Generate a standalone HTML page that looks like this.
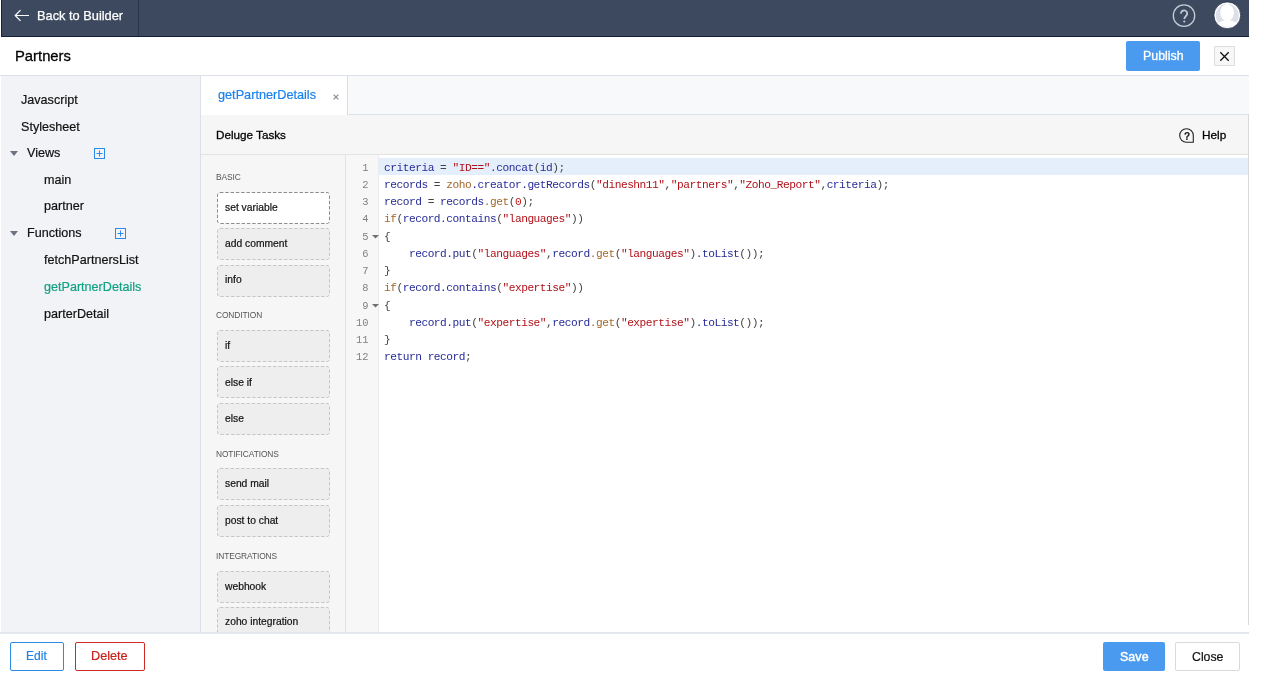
<!DOCTYPE html>
<html><head><meta charset="utf-8"><style>
*{box-sizing:border-box;margin:0;padding:0}
html,body{width:1272px;height:690px;overflow:hidden;background:#fff;font-family:"Liberation Sans",sans-serif;color:#222}
.a{position:absolute}
.t{position:absolute;white-space:pre;will-change:transform;-webkit-text-stroke:0.2px currentColor}
</style></head><body>
<div class="a" style="left:1px;top:0;width:1248px;height:37px;background:#3d495e;border-bottom:1px solid #14203a;border-left:1px solid #18233a"></div>
<div class="a" style="left:138px;top:0;width:1px;height:36px;background:#2b364a"></div>
<svg class="a" style="left:14px;top:9px" width="16" height="13" viewBox="0 0 16 13"><path d="M15 6.5H1.5M6.5 1.2L1.2 6.5L6.5 11.8" fill="none" stroke="#fff" stroke-width="1.2"/></svg>
<div class="t" style="left:37px;top:10px;font-size:12.8px;line-height:12.8px;color:#fff;font-weight:normal;font-family:'Liberation Sans',sans-serif;-webkit-text-stroke:0.25px #fff">Back to Builder</div>
<svg class="a" style="left:1171px;top:3px" width="26" height="26" viewBox="0 0 26 26"><circle cx="13" cy="12.65" r="10.7" fill="none" stroke="#c5ccd8" stroke-width="1.3"/><path d="M10 10.6A3.1 3.1 0 1 1 15.6 12.3C14.9 13.5 13.3 14 13.3 16.1" fill="none" stroke="#c5ccd8" stroke-width="1.8"/><circle cx="13.3" cy="18.5" r="1.1" fill="#c5ccd8"/></svg>
<svg class="a" style="left:1213px;top:1px" width="29" height="29" viewBox="0 0 29 29"><circle cx="14.3" cy="14.3" r="13.4" fill="#fff" stroke="#222d42" stroke-width="0.8"/><circle cx="14.3" cy="14.3" r="11.5" fill="#dde0e8"/><ellipse cx="14.1" cy="11.5" rx="6.8" ry="8.6" fill="#fff"/><path d="M5.48 21.68A11.5 11.5 0 0 0 23.12 21.68A14 12 0 0 0 5.48 21.68Z" fill="#fff"/></svg>
<div class="a" style="left:0;top:75px;width:1249px;height:1px;background:#dde1e8"></div>
<div class="t" style="left:14.6px;top:49px;font-size:14.8px;line-height:14.8px;color:#000;font-weight:normal;font-family:'Liberation Sans',sans-serif;-webkit-text-stroke:0.3px #000">Partners</div>
<div class="a" style="left:1126px;top:41px;width:74px;height:30px;background:#4a9bf0;border-radius:2px"></div>
<div class="t" style="left:1143px;top:50px;font-size:12.4px;line-height:12.4px;color:#fff;font-weight:normal;font-family:'Liberation Sans',sans-serif;-webkit-text-stroke:0.3px #fff">Publish</div>
<div class="a" style="left:1214px;top:46px;width:21px;height:20px;background:#f7f7f7;border:1px solid #dcdcdc;border-radius:1px"></div>
<svg class="a" style="left:1219px;top:51px" width="11" height="11" viewBox="0 0 11 11"><path d="M1.3 1.3L9.7 9.7M9.7 1.3L1.3 9.7" stroke="#111" stroke-width="1.3"/></svg>
<div class="a" style="left:1px;top:76px;width:199px;height:556px;background:#f2f3f6"></div>
<div class="t" style="left:21px;top:94px;font-size:12.6px;line-height:12.6px;color:#111;font-weight:normal;font-family:'Liberation Sans',sans-serif;">Javascript</div>
<div class="t" style="left:21px;top:121px;font-size:12.6px;line-height:12.6px;color:#111;font-weight:normal;font-family:'Liberation Sans',sans-serif;">Stylesheet</div>
<div class="t" style="left:26.5px;top:147px;font-size:12.6px;line-height:12.6px;color:#111;font-weight:normal;font-family:'Liberation Sans',sans-serif;">Views</div>
<div class="t" style="left:43.9px;top:174px;font-size:12.6px;line-height:12.6px;color:#111;font-weight:normal;font-family:'Liberation Sans',sans-serif;">main</div>
<div class="t" style="left:43.9px;top:200px;font-size:12.6px;line-height:12.6px;color:#111;font-weight:normal;font-family:'Liberation Sans',sans-serif;">partner</div>
<div class="t" style="left:26.6px;top:227px;font-size:12.6px;line-height:12.6px;color:#111;font-weight:normal;font-family:'Liberation Sans',sans-serif;">Functions</div>
<div class="t" style="left:43.9px;top:254px;font-size:12.6px;line-height:12.6px;color:#111;font-weight:normal;font-family:'Liberation Sans',sans-serif;">fetchPartnersList</div>
<div class="t" style="left:43.9px;top:281px;font-size:12.6px;line-height:12.6px;color:#12a184;font-weight:normal;font-family:'Liberation Sans',sans-serif;">getPartnerDetails</div>
<div class="t" style="left:43.9px;top:308px;font-size:12.6px;line-height:12.6px;color:#111;font-weight:normal;font-family:'Liberation Sans',sans-serif;">parterDetail</div>
<svg class="a" style="left:10px;top:150.5px" width="8" height="5" viewBox="0 0 8 5"><path d="M0 0H8L4 5Z" fill="#6b7480"/></svg>
<svg class="a" style="left:10px;top:230.8px" width="8" height="5" viewBox="0 0 8 5"><path d="M0 0H8L4 5Z" fill="#6b7480"/></svg>
<svg class="a" style="left:94px;top:148px" width="11" height="11" viewBox="0 0 11 11"><rect x="0.5" y="0.5" width="10" height="10" fill="none" stroke="#2c8ae8" stroke-width="1"/><path d="M5.5 2.5V8.5M2.5 5.5H8.5" stroke="#2c8ae8" stroke-width="1"/></svg>
<svg class="a" style="left:114.5px;top:228.3px" width="11" height="11" viewBox="0 0 11 11"><rect x="0.5" y="0.5" width="10" height="10" fill="none" stroke="#2c8ae8" stroke-width="1"/><path d="M5.5 2.5V8.5M2.5 5.5H8.5" stroke="#2c8ae8" stroke-width="1"/></svg>
<div class="a" style="left:200px;top:76px;width:1049px;height:39px;background:#f8f9fa;border-bottom:1px solid #dfe2e7"></div>
<div class="a" style="left:200px;top:76px;width:148px;height:39px;background:#fff;border-right:1px solid #dadde3"></div>
<div class="t" style="left:218px;top:89px;font-size:12.7px;line-height:12.7px;color:#1a80ec;font-weight:normal;font-family:'Liberation Sans',sans-serif;">getPartnerDetails</div>
<svg class="a" style="left:332.5px;top:93.5px" width="6" height="6" viewBox="0 0 6 6"><path d="M0.6 0.6L5.4 5.4M5.4 0.6L0.6 5.4" stroke="#8d9099" stroke-width="1.3"/></svg>
<div class="a" style="left:200px;top:115px;width:1049px;height:40px;background:#f6f6f6;border-bottom:1px solid #e3e3e3"></div>
<div class="t" style="left:216.4px;top:129px;font-size:11.7px;line-height:11.7px;color:#000;font-weight:normal;font-family:'Liberation Sans',sans-serif;-webkit-text-stroke:0.3px #000">Deluge Tasks</div>
<svg class="a" style="left:1179px;top:128px" width="16" height="16" viewBox="0 0 16 16"><path d="M14.3 14.3H7.5A6.8 6.8 0 1 1 14.3 7.5Z" fill="none" stroke="#222" stroke-width="1.1"/></svg>
<div class="t" style="left:1184.2px;top:132px;font-size:10px;line-height:10px;color:#222;font-weight:bold;font-family:'Liberation Sans',sans-serif;">?</div>
<div class="t" style="left:1201.7px;top:130px;font-size:11.8px;line-height:11.8px;color:#000;font-weight:normal;font-family:'Liberation Sans',sans-serif;-webkit-text-stroke:0.3px #000">Help</div>
<div class="a" style="left:200px;top:155px;width:146px;height:477px;background:#f6f6f6;border-right:1px solid #e2e2e2"></div>
<div class="t" style="left:216px;top:173px;font-size:8.4px;line-height:8.4px;color:#555;font-weight:normal;font-family:'Liberation Sans',sans-serif;letter-spacing:-0.1px;-webkit-text-stroke:0">BASIC</div>
<div class="t" style="left:216px;top:311px;font-size:8.4px;line-height:8.4px;color:#555;font-weight:normal;font-family:'Liberation Sans',sans-serif;letter-spacing:-0.1px;-webkit-text-stroke:0">CONDITION</div>
<div class="t" style="left:216px;top:450px;font-size:8.4px;line-height:8.4px;color:#555;font-weight:normal;font-family:'Liberation Sans',sans-serif;letter-spacing:-0.1px;-webkit-text-stroke:0">NOTIFICATIONS</div>
<div class="t" style="left:216px;top:552px;font-size:8.4px;line-height:8.4px;color:#555;font-weight:normal;font-family:'Liberation Sans',sans-serif;letter-spacing:-0.1px;-webkit-text-stroke:0">INTEGRATIONS</div>
<div class="a" style="left:200px;top:155px;width:145px;height:477px;overflow:hidden">
<svg class="a" style="left:17px;top:37px" width="113" height="32" viewBox="0 0 113 32"><rect x="0.5" y="0.5" width="112" height="31" rx="2.5" fill="#ffffff" stroke="#8c8c8c" stroke-width="1" stroke-dasharray="3.4 1.9"/></svg>
<div class="t" style="left:24.599999999999994px;top:48px;font-size:10.3px;line-height:10.3px;color:#111;font-weight:normal;font-family:'Liberation Sans',sans-serif;">set variable</div>
<svg class="a" style="left:17px;top:73px" width="113" height="32" viewBox="0 0 113 32"><rect x="0.5" y="0.5" width="112" height="31" rx="2.5" fill="#eeeeee" stroke="#c6c6c6" stroke-width="1" stroke-dasharray="3.4 1.9"/></svg>
<div class="t" style="left:24.599999999999994px;top:84px;font-size:10.3px;line-height:10.3px;color:#111;font-weight:normal;font-family:'Liberation Sans',sans-serif;">add comment</div>
<svg class="a" style="left:17px;top:110px" width="113" height="32" viewBox="0 0 113 32"><rect x="0.5" y="0.5" width="112" height="31" rx="2.5" fill="#eeeeee" stroke="#c6c6c6" stroke-width="1" stroke-dasharray="3.4 1.9"/></svg>
<div class="t" style="left:24.599999999999994px;top:120px;font-size:10.3px;line-height:10.3px;color:#111;font-weight:normal;font-family:'Liberation Sans',sans-serif;">info</div>
<svg class="a" style="left:17px;top:175px" width="113" height="32" viewBox="0 0 113 32"><rect x="0.5" y="0.5" width="112" height="31" rx="2.5" fill="#eeeeee" stroke="#c6c6c6" stroke-width="1" stroke-dasharray="3.4 1.9"/></svg>
<div class="t" style="left:24.599999999999994px;top:186px;font-size:10.3px;line-height:10.3px;color:#111;font-weight:normal;font-family:'Liberation Sans',sans-serif;">if</div>
<svg class="a" style="left:17px;top:211px" width="113" height="32" viewBox="0 0 113 32"><rect x="0.5" y="0.5" width="112" height="31" rx="2.5" fill="#eeeeee" stroke="#c6c6c6" stroke-width="1" stroke-dasharray="3.4 1.9"/></svg>
<div class="t" style="left:24.599999999999994px;top:223px;font-size:10.3px;line-height:10.3px;color:#111;font-weight:normal;font-family:'Liberation Sans',sans-serif;">else if</div>
<svg class="a" style="left:17px;top:248px" width="113" height="32" viewBox="0 0 113 32"><rect x="0.5" y="0.5" width="112" height="31" rx="2.5" fill="#eeeeee" stroke="#c6c6c6" stroke-width="1" stroke-dasharray="3.4 1.9"/></svg>
<div class="t" style="left:24.599999999999994px;top:259px;font-size:10.3px;line-height:10.3px;color:#111;font-weight:normal;font-family:'Liberation Sans',sans-serif;">else</div>
<svg class="a" style="left:17px;top:313px" width="113" height="32" viewBox="0 0 113 32"><rect x="0.5" y="0.5" width="112" height="31" rx="2.5" fill="#eeeeee" stroke="#c6c6c6" stroke-width="1" stroke-dasharray="3.4 1.9"/></svg>
<div class="t" style="left:24.599999999999994px;top:324px;font-size:10.3px;line-height:10.3px;color:#111;font-weight:normal;font-family:'Liberation Sans',sans-serif;">send mail</div>
<svg class="a" style="left:17px;top:350px" width="113" height="32" viewBox="0 0 113 32"><rect x="0.5" y="0.5" width="112" height="31" rx="2.5" fill="#eeeeee" stroke="#c6c6c6" stroke-width="1" stroke-dasharray="3.4 1.9"/></svg>
<div class="t" style="left:24.599999999999994px;top:361px;font-size:10.3px;line-height:10.3px;color:#111;font-weight:normal;font-family:'Liberation Sans',sans-serif;">post to chat</div>
<svg class="a" style="left:17px;top:415.5px" width="113" height="32" viewBox="0 0 113 32"><rect x="0.5" y="0.5" width="112" height="31" rx="2.5" fill="#eeeeee" stroke="#c6c6c6" stroke-width="1" stroke-dasharray="3.4 1.9"/></svg>
<div class="t" style="left:24.599999999999994px;top:427px;font-size:10.3px;line-height:10.3px;color:#111;font-weight:normal;font-family:'Liberation Sans',sans-serif;">webhook</div>
<svg class="a" style="left:17px;top:452px" width="113" height="32" viewBox="0 0 113 32"><rect x="0.5" y="0.5" width="112" height="31" rx="2.5" fill="#eeeeee" stroke="#c6c6c6" stroke-width="1" stroke-dasharray="3.4 1.9"/></svg>
<div class="t" style="left:24.599999999999994px;top:462px;font-size:10.3px;line-height:10.3px;color:#111;font-weight:normal;font-family:'Liberation Sans',sans-serif;">zoho integration</div>
</div>
<div class="a" style="left:346px;top:155px;width:33px;height:477px;background:#f7f7f7;border-right:1px solid #ececec"></div>
<div class="a" style="left:379px;top:155px;width:870px;height:477px;background:#fff"></div>
<div class="a" style="left:200px;top:76px;width:1px;height:556px;background:#dcdfe5"></div>
<div class="a" style="left:1248px;top:114px;width:1px;height:511px;background:#d9d9d9"></div>
<div class="a" style="left:379px;top:158px;width:869px;height:17.3px;background:#e5effc"></div>
<div class="t" style="left:383.6px;top:163px;font-size:11.2px;line-height:11.2px;color:#272c98;font-weight:normal;font-family:'Liberation Mono',monospace;-webkit-text-stroke:0;letter-spacing:-0.48px"><span style="color:#272c98">criteria</span><span style="color:#444"> = </span><span style="color:#b01219">&quot;ID==&quot;</span><span style="color:#272c98">.concat</span><span style="color:#444">(</span><span style="color:#272c98">id</span><span style="color:#444">);</span></div>
<div class="t" style="left:330px;top:163px;font-size:10.4px;line-height:10.4px;color:#808080;font-weight:normal;font-family:'Liberation Mono',monospace;width:38.5px;text-align:right;-webkit-text-stroke:0">1</div>
<div class="t" style="left:383.6px;top:180px;font-size:11.2px;line-height:11.2px;color:#272c98;font-weight:normal;font-family:'Liberation Mono',monospace;-webkit-text-stroke:0;letter-spacing:-0.48px"><span style="color:#272c98">records</span><span style="color:#444"> = </span><span style="color:#a3692b">zoho</span><span style="color:#272c98">.creator.getRecords</span><span style="color:#444">(</span><span style="color:#b01219">&quot;dineshn11&quot;</span><span style="color:#444">,</span><span style="color:#b01219">&quot;partners&quot;</span><span style="color:#444">,</span><span style="color:#b01219">&quot;Zoho_Report&quot;</span><span style="color:#444">,</span><span style="color:#272c98">criteria</span><span style="color:#444">);</span></div>
<div class="t" style="left:330px;top:180px;font-size:10.4px;line-height:10.4px;color:#808080;font-weight:normal;font-family:'Liberation Mono',monospace;width:38.5px;text-align:right;-webkit-text-stroke:0">2</div>
<div class="t" style="left:383.6px;top:197px;font-size:11.2px;line-height:11.2px;color:#272c98;font-weight:normal;font-family:'Liberation Mono',monospace;-webkit-text-stroke:0;letter-spacing:-0.48px"><span style="color:#272c98">record</span><span style="color:#444"> = </span><span style="color:#272c98">records</span><span style="color:#a3692b">.get</span><span style="color:#444">(</span><span style="color:#c41a16">0</span><span style="color:#444">);</span></div>
<div class="t" style="left:330px;top:197px;font-size:10.4px;line-height:10.4px;color:#808080;font-weight:normal;font-family:'Liberation Mono',monospace;width:38.5px;text-align:right;-webkit-text-stroke:0">3</div>
<div class="t" style="left:383.6px;top:214px;font-size:11.2px;line-height:11.2px;color:#272c98;font-weight:normal;font-family:'Liberation Mono',monospace;-webkit-text-stroke:0;letter-spacing:-0.48px"><span style="color:#a3692b">if</span><span style="color:#444">(</span><span style="color:#272c98">record.contains</span><span style="color:#444">(</span><span style="color:#b01219">&quot;languages&quot;</span><span style="color:#444">))</span></div>
<div class="t" style="left:330px;top:214px;font-size:10.4px;line-height:10.4px;color:#808080;font-weight:normal;font-family:'Liberation Mono',monospace;width:38.5px;text-align:right;-webkit-text-stroke:0">4</div>
<div class="t" style="left:383.6px;top:232px;font-size:11.2px;line-height:11.2px;color:#272c98;font-weight:normal;font-family:'Liberation Mono',monospace;-webkit-text-stroke:0;letter-spacing:-0.48px"><span style="color:#444">{</span></div>
<div class="t" style="left:330px;top:232px;font-size:10.4px;line-height:10.4px;color:#808080;font-weight:normal;font-family:'Liberation Mono',monospace;width:38.5px;text-align:right;-webkit-text-stroke:0">5</div>
<div class="t" style="left:383.6px;top:249px;font-size:11.2px;line-height:11.2px;color:#272c98;font-weight:normal;font-family:'Liberation Mono',monospace;-webkit-text-stroke:0;letter-spacing:-0.48px"><span style="color:#272c98">    record.put</span><span style="color:#444">(</span><span style="color:#b01219">&quot;languages&quot;</span><span style="color:#444">,</span><span style="color:#272c98">record</span><span style="color:#a3692b">.get</span><span style="color:#444">(</span><span style="color:#b01219">&quot;languages&quot;</span><span style="color:#444">)</span><span style="color:#272c98">.toList</span><span style="color:#444">());</span></div>
<div class="t" style="left:330px;top:249px;font-size:10.4px;line-height:10.4px;color:#808080;font-weight:normal;font-family:'Liberation Mono',monospace;width:38.5px;text-align:right;-webkit-text-stroke:0">6</div>
<div class="t" style="left:383.6px;top:266px;font-size:11.2px;line-height:11.2px;color:#272c98;font-weight:normal;font-family:'Liberation Mono',monospace;-webkit-text-stroke:0;letter-spacing:-0.48px"><span style="color:#444">}</span></div>
<div class="t" style="left:330px;top:266px;font-size:10.4px;line-height:10.4px;color:#808080;font-weight:normal;font-family:'Liberation Mono',monospace;width:38.5px;text-align:right;-webkit-text-stroke:0">7</div>
<div class="t" style="left:383.6px;top:283px;font-size:11.2px;line-height:11.2px;color:#272c98;font-weight:normal;font-family:'Liberation Mono',monospace;-webkit-text-stroke:0;letter-spacing:-0.48px"><span style="color:#a3692b">if</span><span style="color:#444">(</span><span style="color:#272c98">record.contains</span><span style="color:#444">(</span><span style="color:#b01219">&quot;expertise&quot;</span><span style="color:#444">))</span></div>
<div class="t" style="left:330px;top:283px;font-size:10.4px;line-height:10.4px;color:#808080;font-weight:normal;font-family:'Liberation Mono',monospace;width:38.5px;text-align:right;-webkit-text-stroke:0">8</div>
<div class="t" style="left:383.6px;top:301px;font-size:11.2px;line-height:11.2px;color:#272c98;font-weight:normal;font-family:'Liberation Mono',monospace;-webkit-text-stroke:0;letter-spacing:-0.48px"><span style="color:#444">{</span></div>
<div class="t" style="left:330px;top:301px;font-size:10.4px;line-height:10.4px;color:#808080;font-weight:normal;font-family:'Liberation Mono',monospace;width:38.5px;text-align:right;-webkit-text-stroke:0">9</div>
<div class="t" style="left:383.6px;top:318px;font-size:11.2px;line-height:11.2px;color:#272c98;font-weight:normal;font-family:'Liberation Mono',monospace;-webkit-text-stroke:0;letter-spacing:-0.48px"><span style="color:#272c98">    record.put</span><span style="color:#444">(</span><span style="color:#b01219">&quot;expertise&quot;</span><span style="color:#444">,</span><span style="color:#272c98">record</span><span style="color:#a3692b">.get</span><span style="color:#444">(</span><span style="color:#b01219">&quot;expertise&quot;</span><span style="color:#444">)</span><span style="color:#272c98">.toList</span><span style="color:#444">());</span></div>
<div class="t" style="left:330px;top:318px;font-size:10.4px;line-height:10.4px;color:#808080;font-weight:normal;font-family:'Liberation Mono',monospace;width:38.5px;text-align:right;-webkit-text-stroke:0">10</div>
<div class="t" style="left:383.6px;top:335px;font-size:11.2px;line-height:11.2px;color:#272c98;font-weight:normal;font-family:'Liberation Mono',monospace;-webkit-text-stroke:0;letter-spacing:-0.48px"><span style="color:#444">}</span></div>
<div class="t" style="left:330px;top:335px;font-size:10.4px;line-height:10.4px;color:#808080;font-weight:normal;font-family:'Liberation Mono',monospace;width:38.5px;text-align:right;-webkit-text-stroke:0">11</div>
<div class="t" style="left:383.6px;top:352px;font-size:11.2px;line-height:11.2px;color:#272c98;font-weight:normal;font-family:'Liberation Mono',monospace;-webkit-text-stroke:0;letter-spacing:-0.48px"><span style="color:#272c98">return record</span><span style="color:#444">;</span></div>
<div class="t" style="left:330px;top:352px;font-size:10.4px;line-height:10.4px;color:#808080;font-weight:normal;font-family:'Liberation Mono',monospace;width:38.5px;text-align:right;-webkit-text-stroke:0">12</div>
<svg class="a" style="left:371.5px;top:234.80px" width="7" height="4" viewBox="0 0 7 4"><path d="M0 0H7L3.5 3.5Z" fill="#707070"/></svg>
<svg class="a" style="left:371.5px;top:303.80px" width="7" height="4" viewBox="0 0 7 4"><path d="M0 0H7L3.5 3.5Z" fill="#707070"/></svg>
<div class="a" style="left:0;top:632px;width:1249px;height:2px;background:#e4e7eb"></div>
<div class="a" style="left:10px;top:642px;width:54px;height:29px;border:1px solid #2d8be8;border-radius:2px;background:#fff"></div>
<div class="t" style="left:26px;top:650px;font-size:12.1px;line-height:12.1px;color:#1f82ea;font-weight:normal;font-family:'Liberation Sans',sans-serif;">Edit</div>
<div class="a" style="left:75px;top:642px;width:70px;height:29px;border:1px solid #cc2b24;border-radius:2px;background:#fff"></div>
<div class="t" style="left:91px;top:650px;font-size:12.7px;line-height:12.7px;color:#c8221c;font-weight:normal;font-family:'Liberation Sans',sans-serif;">Delete</div>
<div class="a" style="left:1103px;top:642px;width:62px;height:29px;background:#4a9bf0;border-radius:2px"></div>
<div class="t" style="left:1120px;top:651px;font-size:12.4px;line-height:12.4px;color:#fff;font-weight:normal;font-family:'Liberation Sans',sans-serif;-webkit-text-stroke:0.45px #fff;letter-spacing:0.1px">Save</div>
<div class="a" style="left:1175px;top:642px;width:65px;height:29px;border:1px solid #dadada;border-radius:2px;background:#fff"></div>
<div class="t" style="left:1191.6px;top:651px;font-size:12.3px;line-height:12.3px;color:#111;font-weight:normal;font-family:'Liberation Sans',sans-serif;">Close</div>
</body></html>
